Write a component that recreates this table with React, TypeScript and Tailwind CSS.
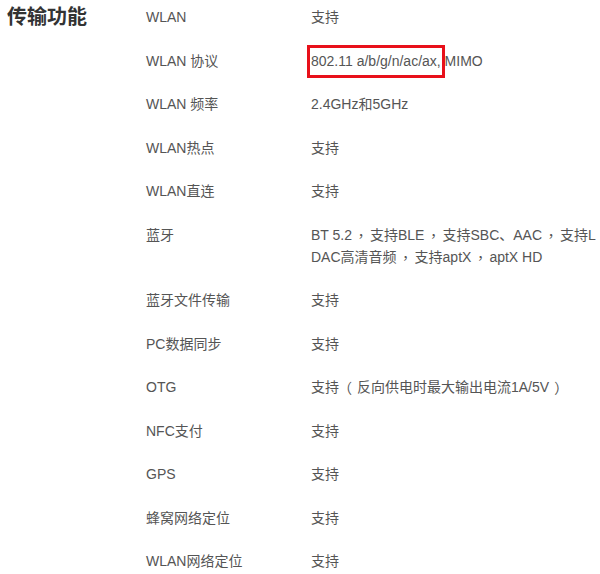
const rows: { label: string; value: string }[] = [
  { label: "WLAN", value: "支持" },
  { label: "WLAN 协议", value: "802.11 a/b/g/n/ac/ax, MIMO" },
  { label: "WLAN 频率", value: "2.4GHz和5GHz" },
  { label: "WLAN热点", value: "支持" },
  { label: "WLAN直连", value: "支持" },
  { label: "蓝牙", value: "BT 5.2，支持BLE，支持SBC、AAC，支持LDAC高清音频，支持aptX，aptX HD" },
  { label: "蓝牙文件传输", value: "支持" },
  { label: "PC数据同步", value: "支持" },
  { label: "OTG", value: "支持（反向供电时最大输出电流1A/5V）" },
  { label: "NFC支付", value: "支持" },
  { label: "GPS", value: "支持" },
  { label: "蜂窝网络定位", value: "支持" },
  { label: "WLAN网络定位", value: "支持" },
]

const tc = { fontFamily: '"Noto Sans CJK TC", sans-serif' }

// full-width punctuation sits centred in a slightly wider cell, like the source page
function Value({ text }: { text: string }) {
  const parts = text.split(/([，（）])/)
  return (
    <>
      {parts.map((p, i) => {
        if (p === "，")
          return (
            <span key={i} className="align-top mx-[2px]" style={tc}>
              {p}
            </span>
          )
        if (p === "（")
          return (
            <span key={i} className="align-top ml-[-1px] mr-[5px]" style={tc}>
              {p}
            </span>
          )
        if (p === "）")
          return (
            <span key={i} className="align-top ml-[5px] mr-[-1px]" style={tc}>
              {p}
            </span>
          )
        return <span key={i}>{p}</span>
      })}
    </>
  )
}

export default function App() {
  return (
    <div
      className="w-[600px] h-[574px] overflow-hidden bg-white flex pt-[6px]"
      style={{ fontFamily: '"Liberation Sans", Arial, "Noto Sans CJK SC", sans-serif' }}
    >
      <div className="w-[146px] shrink-0 pl-[7px]">
        <h2 className="text-[20px] leading-[22px] font-bold text-[#333]">传输功能</h2>
      </div>
      <div className="flex-1">
        {rows.map((row, i) => (
          <div key={row.label} className="flex text-[14px] leading-[22px] text-[#555] pb-[21.5px]">
            <div className="w-[165px] shrink-0">{row.label}</div>
            <div className="relative flex-1 break-all">
              <Value text={row.value} />
              {i === 1 && (
                <span className="absolute left-[-4px] top-[-5px] w-[138px] h-[33px] border-[3px] border-[#e8101a]" />
              )}
            </div>
          </div>
        ))}
      </div>
    </div>
  )
}
